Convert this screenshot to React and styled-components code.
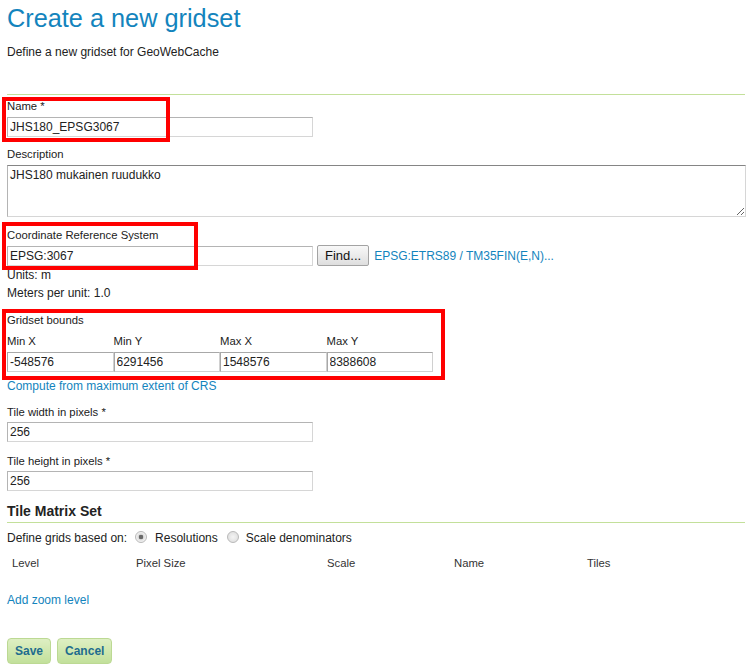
import React from "react";
import styled, { createGlobalStyle } from "styled-components";

const Global = createGlobalStyle`
  html, body { margin: 0; padding: 0; background: #fff; }
  body {
    font-family: "Liberation Sans", Arial, sans-serif;
    color: #333;
    font-size: 12px;
  }
`;

const Page = styled.div`
  position: relative;
  padding: 0 7px;
  display: flex;
  flex-direction: column;
  width: 738px;
`;

const Title = styled.h1`
  margin: 3px 0 0;
  font-size: 25.3px;
  line-height: 30px;
  font-weight: normal;
  color: #1384bd;
`;

const Intro = styled.p`
  margin: 12px 0 0;
  font-size: 12px;
  line-height: 14px;
  color: #222;
`;

const Rule = styled.div`
  margin-top: 35px;
  height: 1px;
  background: #c3e09a;
`;

const Field = styled.div`
  display: flex;
  flex-direction: column;
  align-items: flex-start;
  margin-top: ${(p) => p.$mt}px;
  gap: ${(p) => (p.$gap == null ? 4 : p.$gap)}px;
`;

const Label = styled.label`
  font-size: 11.3px;
  line-height: 13px;
  color: #222;
`;

const inputBase = `
  box-sizing: border-box;
  font-family: "Liberation Sans", Arial, sans-serif;
  font-size: 12px;
  color: #222;
  background: #fff;
  border: 1px solid;
  border-color: #b4b4b4 #d6d6d6 #d6d6d6 #b4b4b4;
  outline: none;
  margin: 0;
`;

const TextInput = styled.input`
  ${inputBase}
  width: ${(p) => p.$w || 306}px;
  height: 20px;
  padding: 0 2px;
`;

const TextArea = styled.textarea`
  ${inputBase}
  width: 739px;
  height: 52px;
  padding: 2px 2px;
  line-height: 14px;
  resize: both;
  border-top-color: #858585;
`;

const CrsRow = styled.div`
  display: flex;
  align-items: flex-start;
  height: 20px;
`;

const FindButton = styled.button`
  box-sizing: border-box;
  margin: -1px 0 0 4px;
  height: 21px;
  padding: 0 7px;
  font-family: "Liberation Sans", Arial, sans-serif;
  font-size: 13px;
  color: #111;
  border: 1px solid #a3a3a3;
  border-radius: 2px;
  background: linear-gradient(#f8f8f8, #dedede);
`;

const Link = styled.a`
  color: #1384bd;
  text-decoration: none;
  font-size: 12px;
  line-height: ${(p) => p.$lh || 14}px;
  margin-top: ${(p) => p.$mt || 0}px;
  margin-left: ${(p) => p.$ml || 0}px;
`;

const InfoLine = styled.div`
  font-size: 12px;
  line-height: 18px;
  color: #222;
`;

const BoundsGrid = styled.div`
  display: grid;
  grid-template-columns: repeat(4, 106.5px);
  row-gap: 4px;
  margin-top: 8px;
`;

const BoundsInput = styled.input`
  ${inputBase}
  width: 100%;
  height: 20px;
  padding: 0 2px;
  border-color: #a8a8a8 #d0d0d0 #d0d0d0 #a8a8a8;
`;

const SectionTitle = styled.h2`
  margin: 12px 0 0;
  padding-bottom: 3px;
  font-size: 14px;
  line-height: 16px;
  font-weight: bold;
  color: #222;
  border-bottom: 1px solid #c3e09a;
`;

const RadioRow = styled.div`
  margin-top: 8px;
  display: flex;
  align-items: center;
  font-size: 12px;
  line-height: 14px;
  color: #222;
`;

const Radio = styled.input.attrs({ type: "radio" })`
  appearance: none;
  box-sizing: border-box;
  width: 12px;
  height: 12px;
  margin: -2px ${(p) => p.$mr}px 0 ${(p) => p.$ml}px;
  border-radius: 50%;
  border: 1px solid #b9b9b9;
  background: ${(p) =>
    p.checked
      ? "radial-gradient(circle, #6a6a6a 0 2px, #dcdcdc 2.6px, #f4f4f4 5px)"
      : "radial-gradient(circle, #f4f4f4 0, #dedede 6px)"};
`;

const TableHead = styled.div`
  margin-top: 12px;
  padding-left: 5px;
  display: grid;
  grid-template-columns: 124px 191px 127px 133px 1fr;
  font-size: 11.3px;
  line-height: 13px;
  color: #333;
`;

const ButtonRow = styled.div`
  margin-top: 31px;
  display: flex;
  gap: 6px;
`;

const ActionButton = styled.button`
  box-sizing: border-box;
  height: 26px;
  padding: 0 7px;
  font-family: "Liberation Sans", Arial, sans-serif;
  font-size: 12px;
  font-weight: bold;
  color: #1e6c8e;
  border: 1px solid #bcd993;
  border-radius: 4px;
  background: linear-gradient(#deefc3, #c2e09b);
`;

const Highlight = styled.div`
  position: absolute;
  box-sizing: border-box;
  border: 4px solid #ff0000;
  pointer-events: none;
`;

const highlights = [
  { left: 2, top: 97, width: 168, height: 45 },
  { left: 2, top: 222, width: 196, height: 48 },
  { left: 2, top: 309, width: 443, height: 71 },
];

const bounds = [
  ["Min X", "-548576"],
  ["Min Y", "6291456"],
  ["Max X", "1548576"],
  ["Max Y", "8388608"],
];

export default function App() {
  return (
    <>
      <Global />
      <Page>
        <Title>Create a new gridset</Title>
        <Intro>Define a new gridset for GeoWebCache</Intro>
        <Rule />

        <Field $mt={5}>
          <Label>Name *</Label>
          <TextInput defaultValue="JHS180_EPSG3067" />
        </Field>

        <Field $mt={11}>
          <Label>Description</Label>
          <TextArea defaultValue="JHS180 mukainen ruudukko" spellCheck={false} />
        </Field>

        <Field $mt={12}>
          <Label>Coordinate Reference System</Label>
          <CrsRow>
            <TextInput defaultValue="EPSG:3067" />
            <FindButton>Find...</FindButton>
            <Link href="#" $ml={5} $lh={20}>
              EPSG:ETRS89 / TM35FIN(E,N)...
            </Link>
          </CrsRow>
        </Field>

        <InfoLine>Units: m</InfoLine>
        <InfoLine>Meters per unit: 1.0</InfoLine>

        <Field $mt={12} $gap={0}>
          <Label>Gridset bounds</Label>
          <BoundsGrid>
            {bounds.map(([l]) => (
              <Label key={l}>{l}</Label>
            ))}
            {bounds.map(([l, v]) => (
              <BoundsInput key={l + "i"} defaultValue={v} />
            ))}
          </BoundsGrid>
        </Field>

        <Link href="#" $mt={7}>
          Compute from maximum extent of CRS
        </Link>

        <Field $mt={13} $gap={3}>
          <Label>Tile width in pixels *</Label>
          <TextInput defaultValue="256" />
        </Field>

        <Field $mt={13} $gap={3}>
          <Label>Tile height in pixels *</Label>
          <TextInput defaultValue="256" />
        </Field>

        <SectionTitle>Tile Matrix Set</SectionTitle>

        <RadioRow>
          Define grids based on:
          <Radio name="grids" checked readOnly $ml={8} $mr={8} />
          Resolutions
          <Radio name="grids2" checked={false} readOnly $ml={9} $mr={7} />
          Scale denominators
        </RadioRow>

        <TableHead>
          <span>Level</span>
          <span>Pixel Size</span>
          <span>Scale</span>
          <span>Name</span>
          <span>Tiles</span>
        </TableHead>

        <Link href="#" $mt={23}>
          Add zoom level
        </Link>

        <ButtonRow>
          <ActionButton>Save</ActionButton>
          <ActionButton>Cancel</ActionButton>
        </ButtonRow>

        {highlights.map((h, i) => (
          <Highlight key={i} style={h} />
        ))}
      </Page>
    </>
  );
}
